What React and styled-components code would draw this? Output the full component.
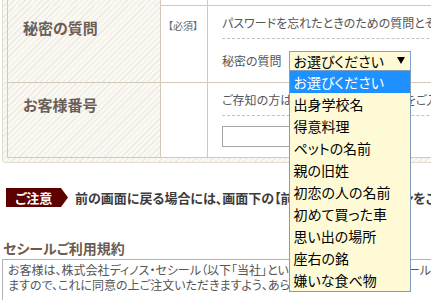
import React from 'react'
import styled, { createGlobalStyle } from 'styled-components'

const GlobalStyle = createGlobalStyle`
  html, body {
    margin: 0;
    padding: 0;
    overflow: hidden;
    background: #fff;
  }
  body {
    font-family: "Noto Sans CJK JP", "Noto Sans", sans-serif;
    font-feature-settings: "palt";
    color: #333;
  }
  * { box-sizing: border-box; }
`

const stripes = 'repeating-linear-gradient(135deg, #efeadf 0 1px, #faf8f3 1px 4px)'

const Page = styled.div`
  width: 560px;
  padding-left: 2px;
`

const Frame = styled.div`
  border: 1px solid #e2dccf;
  border-top: none;
  border-radius: 0 0 4px 4px;
  padding: 0 4px 4px;
  background: ${stripes};
`

const Table = styled.div`
  display: flex;
  flex-direction: column;
  border-left: 1px solid #d2c9bb;
  border-right: 1px solid #d2c9bb;
  background: #fff;
`

const Row = styled.div`
  display: grid;
  grid-template-columns: 153px 47px 1fr;
  height: ${p => p.$h}px;
  border-bottom: 1px solid #d2c9bb;
`

const HeadCell = styled.div`
  background: ${stripes};
  border-right: 1px solid #d2c9bb;
  padding: 12px 0 0 15px;
  font-size: 15px;
  line-height: 20px;
  font-weight: 700;
  color: #6b5e57;
`

const NoteCell = styled.div`
  border-right: 1px solid #d2c9bb;
  padding: 13px 0 0 7px;
  font-size: 10px;
  line-height: 14px;
  color: #666;
`

const BodyCell = styled.div`
  display: flex;
  flex-direction: column;
  padding-left: 14px;
  min-width: 0;
`

const PartTop = styled.div`
  height: 33px;
  display: flex;
  align-items: center;
  border-bottom: 1px dashed #c9c1b5;
`

const PartBottom = styled.div`
  flex: 1;
  display: flex;
  align-items: center;
`

const Desc = styled.span`
  font-size: 12px;
  color: #555;
  white-space: nowrap;
`

const FieldLabel = styled.span`
  font-size: 12px;
  color: #555;
  white-space: nowrap;
`

const Select = styled.div`
  position: relative;
  margin-left: 7px;
  width: 122px;
  height: 20px;
  border: 1px solid #7f9fd9;
  background: #fffad6;
  display: flex;
  align-items: center;
  justify-content: space-between;
  padding: 0 5px 0 4px;
  font-size: 14px;
  color: #000;
`

const Arrow = styled.span`
  width: 0;
  height: 0;
  border-left: 4px solid transparent;
  border-right: 4px solid transparent;
  border-top: 7px solid #000;
`

const List = styled.ul`
  position: absolute;
  top: 100%;
  left: -1px;
  width: 122px;
  margin: 0;
  padding: 0;
  list-style: none;
  border: 1px solid #7f9db9;
  background: #fffad6;
  z-index: 10;
`

const Option = styled.li`
  height: 22px;
  line-height: 22px;
  padding-left: 4px;
  font-size: 14px;
  white-space: nowrap;
  color: ${p => (p.$active ? '#fff' : '#000')};
  background: ${p => (p.$active ? '#1e90ff' : 'transparent')};
`

const TextInput = styled.div`
  width: 170px;
  height: 21px;
  border: 1px solid #a6a6a6;
  background: #fff;
`

const Notice = styled.div`
  display: flex;
  align-items: center;
  margin-top: 25px;
  padding-left: 4px;
`

const Badge = styled.span`
  width: 62px;
  height: 19px;
  flex: none;
  background: #5c0000;
  clip-path: polygon(0 0, calc(100% - 7px) 0, 100% 50%, calc(100% - 7px) 100%, 0 100%);
  color: #fff;
  font-size: 13px;
  font-weight: 700;
  line-height: 19px;
  padding-left: 9px;
`

const NoticeText = styled.span`
  margin-left: 7px;
  font-size: 13px;
  font-weight: 700;
  color: #3c3c3c;
  white-space: nowrap;
`

const Heading = styled.h2`
  margin: 31px 0 0;
  padding-left: 1px;
  font-size: 14px;
  line-height: 20px;
  font-weight: 700;
  color: #6b5b4e;
`

const TermsBox = styled.div`
  margin-top: 1px;
  height: 60px;
  border: 1px solid #b3b3b3;
  padding: 2px 0 0 5px;
  font-size: 12px;
  line-height: 15px;
  color: #555;
  white-space: nowrap;
  overflow: hidden;
`

const options = [
  'お選びください',
  '出身学校名',
  '得意料理',
  'ペットの名前',
  '親の旧姓',
  '初恋の人の名前',
  '初めて買った車',
  '思い出の場所',
  '座右の銘',
  '嫌いな食べ物',
]

export default function App() {
  return (
    <Page>
      <GlobalStyle />
      <Frame>
        <Table>
          <Row $h={6}>
            <HeadCell />
            <NoteCell />
            <BodyCell />
          </Row>
          <Row $h={77}>
            <HeadCell>秘密の質問</HeadCell>
            <NoteCell>【必須】</NoteCell>
            <BodyCell>
              <PartTop>
                <Desc>パスワードを忘れたときのための質問とその答えを設定してください。</Desc>
              </PartTop>
              <PartBottom>
                <FieldLabel>秘密の質問</FieldLabel>
                <Select>
                  <span>お選びください</span>
                  <Arrow />
                  <List>
                    {options.map((o, i) => (
                      <Option key={o} $active={i === 0}>{o}</Option>
                    ))}
                  </List>
                </Select>
              </PartBottom>
            </BodyCell>
          </Row>
          <Row $h={75}>
            <HeadCell>お客様番号</HeadCell>
            <NoteCell />
            <BodyCell>
              <PartTop>
                <Desc>ご存知の方は、お客様番号（10ケタ）をご入力ください。</Desc>
              </PartTop>
              <PartBottom>
                <TextInput />
              </PartBottom>
            </BodyCell>
          </Row>
        </Table>
      </Frame>

      <Notice>
        <Badge>ご注意</Badge>
        <NoticeText>前の画面に戻る場合には、画面下の【前の画面へ戻る】ボタンをご利用ください。</NoticeText>
      </Notice>

      <Heading>セシールご利用規約</Heading>
      <TermsBox>
        お客様は、株式会社ディノス・セシール（以下「当社」といいます）が提供するセシールのサービスをご利用いただけ
        <br />
        ますので、これに同意の上ご注文いただきますよう、あらかじめご了承ください。
      </TermsBox>
    </Page>
  )
}
